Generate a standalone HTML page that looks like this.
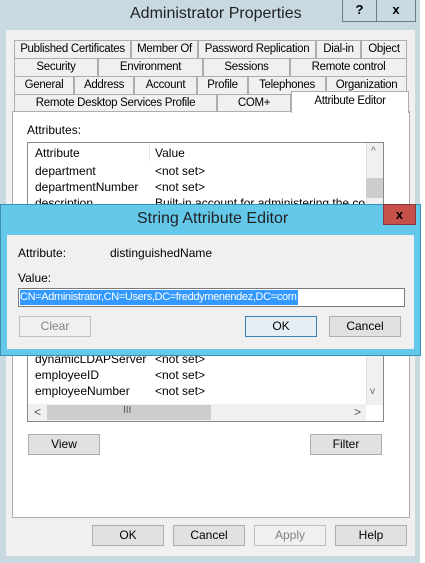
<!DOCTYPE html>
<html><head><style>
*{margin:0;padding:0;box-sizing:border-box}
body{width:425px;height:563px;background:#fff;position:relative;overflow:hidden;font-family:"Liberation Sans",sans-serif;font-size:12px;color:#000}
.a{position:absolute}
.tab{position:absolute;background:#f0f0f0;border:1px solid #adadad;border-bottom:none;text-align:center;line-height:16px;height:18px;white-space:nowrap;font-size:11.5px;letter-spacing:-0.3px}
.btn{position:absolute;background:#e1e1e1;border:1px solid #adadad;text-align:center;line-height:18px;height:21px;width:72px}
.t{position:absolute;white-space:nowrap}
</style></head><body>
<div class="a" style="left:0;top:0;width:425px;height:563px;background:#c8d9e2"></div>
<div class="a" style="left:420px;top:0;width:5px;height:563px;background:#fff"></div>
<div class="t" style="left:130px;top:5px;font-size:16px;color:#222">Administrator Properties</div>
<div class="a" style="left:342px;top:0;width:35px;height:22px;border:1px solid #6e7c84;border-top:none;text-align:center;font-weight:bold;font-size:13px;line-height:20px">?</div>
<div class="a" style="left:376px;top:0;width:40px;height:22px;border:1px solid #6e7c84;border-top:none;text-align:center;font-weight:bold;font-size:13px;line-height:20px">x</div>
<div class="a" style="left:6px;top:30px;width:409px;height:526px;background:#f0f0f0"></div>
<div class="tab" style="left:14px;top:40px;width:117px">Published Certificates</div>
<div class="tab" style="left:131px;top:40px;width:67px">Member Of</div>
<div class="tab" style="left:198px;top:40px;width:118px">Password Replication</div>
<div class="tab" style="left:316px;top:40px;width:45px">Dial-in</div>
<div class="tab" style="left:361px;top:40px;width:46px">Object</div>
<div class="tab" style="left:14px;top:58px;width:84px">Security</div>
<div class="tab" style="left:98px;top:58px;width:105px">Environment</div>
<div class="tab" style="left:203px;top:58px;width:87px">Sessions</div>
<div class="tab" style="left:290px;top:58px;width:117px">Remote control</div>
<div class="tab" style="left:14px;top:76px;width:60px">General</div>
<div class="tab" style="left:74px;top:76px;width:60px">Address</div>
<div class="tab" style="left:134px;top:76px;width:63px">Account</div>
<div class="tab" style="left:197px;top:76px;width:51px">Profile</div>
<div class="tab" style="left:248px;top:76px;width:78px">Telephones</div>
<div class="tab" style="left:326px;top:76px;width:81px">Organization</div>
<div class="tab" style="left:14px;top:94px;width:203px">Remote Desktop Services Profile</div>
<div class="tab" style="left:217px;top:94px;width:74px">COM+</div>
<div class="a" style="left:12px;top:111px;width:398px;height:407px;background:#fff;border:1px solid #adadad"></div>
<div class="tab" style="left:291px;top:91px;width:118px;height:22px;background:#fff;line-height:18px;z-index:2">Attribute Editor</div>
<div class="t" style="left:27px;top:123px">Attributes:</div>
<div class="a" style="left:27px;top:142px;width:357px;height:280px;border:1px solid #828790;background:#fff;overflow:hidden">
<div class="t" style="left:7px;top:3px">Attribute</div>
<div class="a" style="left:121px;top:0;width:1px;height:18px;background:#e5e5e5"></div>
<div class="t" style="left:127px;top:3px">Value</div>
<div class="t" style="left:7px;top:21px">department</div><div class="t" style="left:127px;top:21px">&lt;not set&gt;</div>
<div class="t" style="left:7px;top:37px">departmentNumber</div><div class="t" style="left:127px;top:37px">&lt;not set&gt;</div>
<div class="t" style="left:7px;top:53px">description</div><div class="t" style="left:127px;top:53px">Built-in account for administering the computer</div>
<div class="t" style="left:7px;top:209px">dynamicLDAPServer</div><div class="t" style="left:127px;top:209px">&lt;not set&gt;</div>
<div class="t" style="left:7px;top:225px">employeeID</div><div class="t" style="left:127px;top:225px">&lt;not set&gt;</div>
<div class="t" style="left:7px;top:241px">employeeNumber</div><div class="t" style="left:127px;top:241px">&lt;not set&gt;</div>
<div class="a" style="left:338px;top:0;width:18px;height:262px;background:#f0f0f0;border-left:1px solid #e0e0e0"></div>
<div class="t" style="left:343px;top:3px;font-size:10px;color:#666">^</div>
<div class="a" style="left:338px;top:35px;width:18px;height:20px;background:#cdcdcd"></div>
<div class="t" style="left:342px;top:243px;font-size:10px;color:#666">v</div>
<div class="a" style="left:0;top:261px;width:338px;height:17px;background:#f0f0f0"></div>
<div class="a" style="left:19px;top:262px;width:164px;height:15px;background:#cdcdcd"></div>
<div class="t" style="left:6px;top:262px;color:#555">&lt;</div>
<div class="t" style="left:95px;top:262px;font-size:10px;color:#555">III</div>
<div class="t" style="left:326px;top:262px;color:#555">&gt;</div>
</div>
<div class="btn" style="left:28px;top:434px">View</div>
<div class="btn" style="left:310px;top:434px">Filter</div>
<div class="btn" style="left:92px;top:525px">OK</div>
<div class="btn" style="left:173px;top:525px">Cancel</div>
<div class="btn" style="left:254px;top:525px;border-color:#bfbfbf;color:#838383;background:#f0f0f0">Apply</div>
<div class="btn" style="left:335px;top:525px">Help</div>
<div class="a" style="left:0;top:204px;width:421px;height:152px;background:#63c8ea;border:1px solid #3a8fb0"></div>
<div class="t" style="left:137px;top:210px;font-size:16px;color:#222">String Attribute Editor</div>
<div class="a" style="left:383px;top:204px;width:33px;height:21px;background:#c7504a;border:1px solid #8a3a36;text-align:center;color:#000;font-weight:bold;font-size:13px;line-height:19px">x</div>
<div class="a" style="left:7px;top:235px;width:407px;height:114px;background:#f0f0f0"></div>
<div class="t" style="left:18px;top:246px">Attribute:</div>
<div class="t" style="left:110px;top:246px">distinguishedName</div>
<div class="t" style="left:18px;top:271px">Value:</div>
<div class="a" style="left:18px;top:288px;width:387px;height:19px;background:#fff;border:1px solid #7a7a7a"></div>
<div class="t" style="left:20px;top:290px;background:#3399ff;color:#fff;line-height:15px;font-size:11px;letter-spacing:-0.35px;padding-right:1px">CN=Administrator,CN=Users,DC=freddymenendez,DC=com</div>
<div class="btn" style="left:19px;top:316px;background:#f0f0f0;border-color:#bfbfbf;color:#838383">Clear</div>
<div class="btn" style="left:245px;top:316px;border-color:#3c7fb1;background:#e5eef5">OK</div>
<div class="btn" style="left:329px;top:316px">Cancel</div>
</body></html>
